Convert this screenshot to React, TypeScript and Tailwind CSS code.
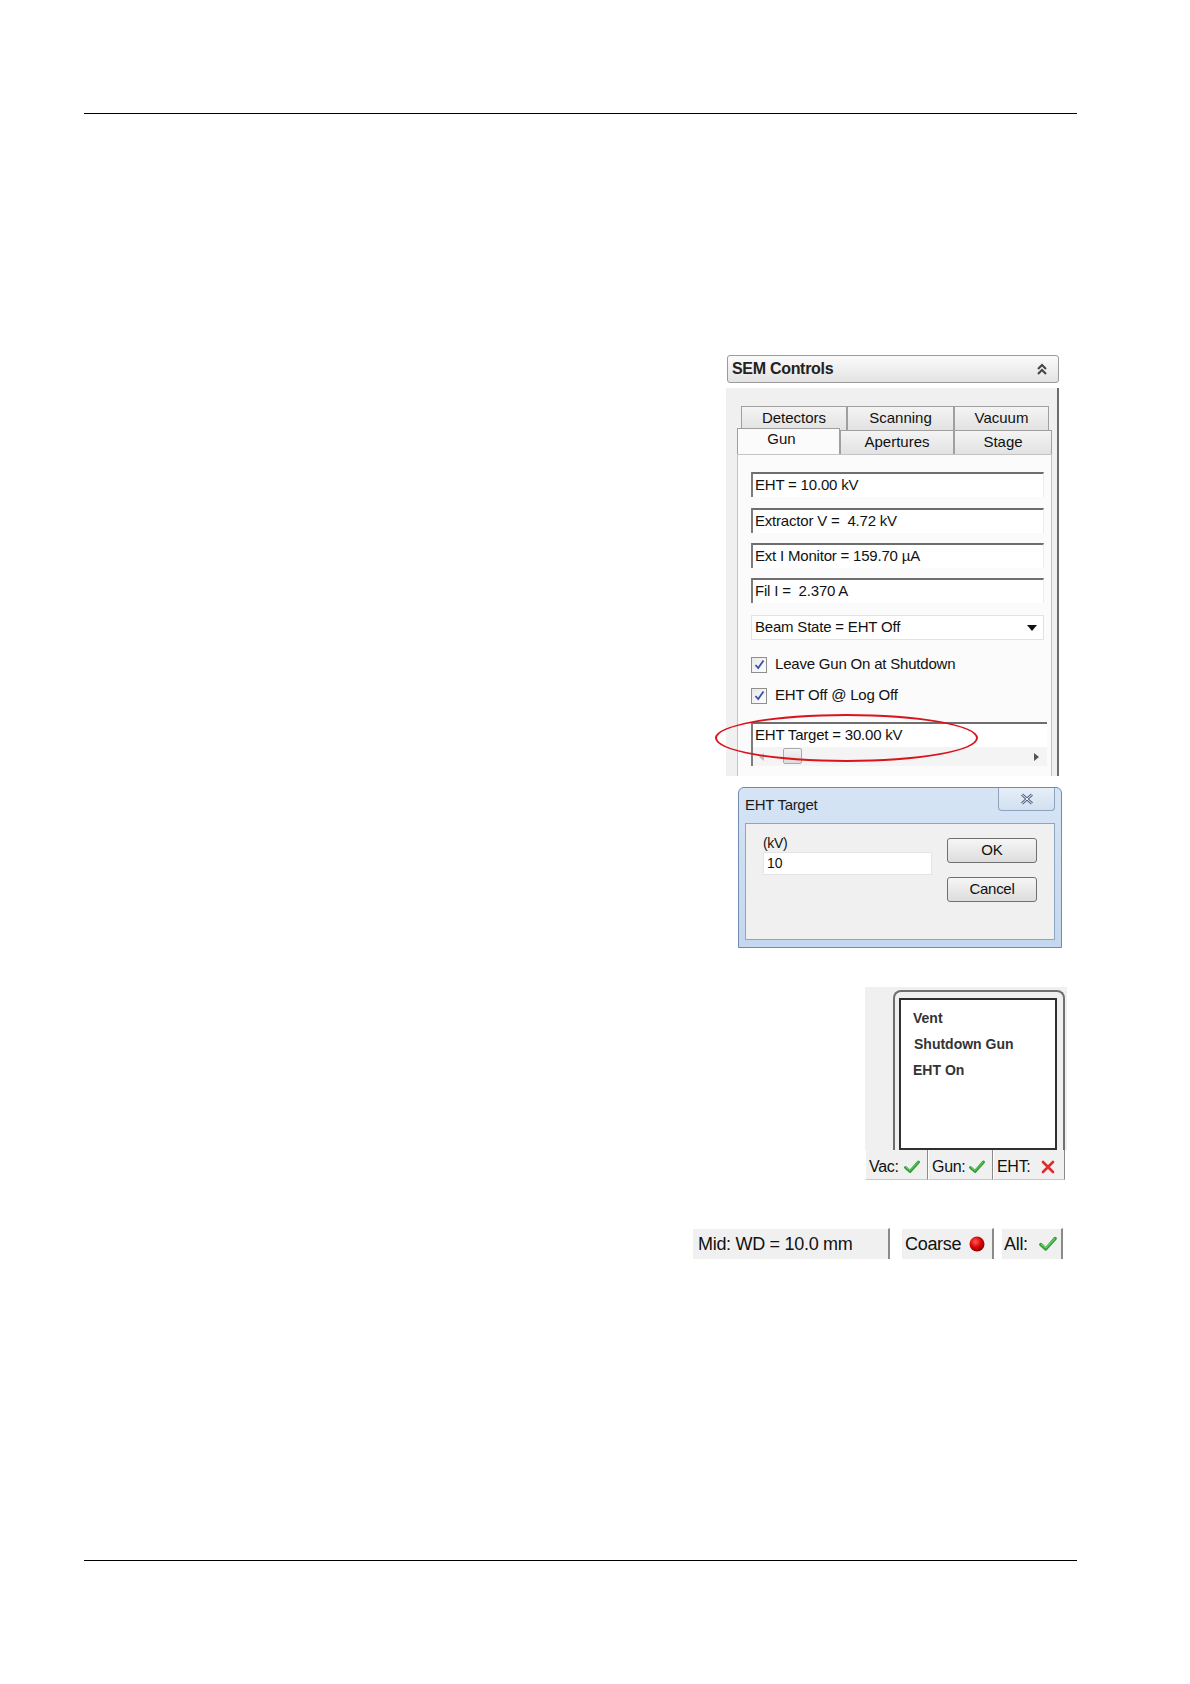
import React from 'react';

const font = { fontFamily: '"Liberation Sans", Arial, sans-serif' };

const Check = ({ size = 18 }: { size?: number }) => (
    <svg width={size} height={size} viewBox="0 0 18 18">
        <path d="M2.5 9.5 L7 13.5 L15.5 4" fill="none" stroke="#2f9e35" strokeWidth="3" strokeLinecap="round" strokeLinejoin="round" />
        <path d="M3 9.2 L7 12.6 L15 4.2" fill="none" stroke="#6fd36b" strokeWidth="1" strokeLinecap="round" strokeLinejoin="round" />
    </svg>
);

const Cross = () => (
    <svg width="16" height="16" viewBox="0 0 16 16">
        <path d="M3 3 L13 13 M13 3 L3 13" stroke="#e02b2b" strokeWidth="2.6" strokeLinecap="round" />
    </svg>
);

const Field = ({ children, className = '' }: { children: React.ReactNode; className?: string }) => (
    <div className={`h-[25px] w-[293px] bg-white border-t-2 border-l-2 border-t-[#6e6e6e] border-l-[#7c7c7c] border-r border-r-[#ececec] flex items-center pl-[2px] text-[15px] text-[#111] tracking-[-0.2px] ${className}`}>
        {children}
    </div>
);

const Tab = ({ label, w, active = false }: { label: string; w: string; active?: boolean }) => (
    <div
        className={`${w} flex items-center justify-center text-[15px] text-[#111] border border-b-0 border-[#9f9f9f] ${
            active ? 'h-[26px] -mt-[2px] bg-[#fbfbfb] relative z-10 -mb-px pb-[4px] pr-[14px]' : 'h-[24px] bg-gradient-to-b from-[#f4f4f4] to-[#e2e2e2]'
        }`}
    >
        {label}
    </div>
);

const CheckBox = ({ label }: { label: string }) => (
    <div className="flex items-center h-[17px]">
        <div className="w-[16px] h-[16px] border border-[#8e8f8f] bg-gradient-to-br from-[#e8e8e8] to-[#ffffff] flex items-center justify-center">
            <svg width="11" height="11" viewBox="0 0 11 11">
                <path d="M1.5 6 L4.2 9 L9.5 1.5" fill="none" stroke="#3553a0" strokeWidth="1.8" />
            </svg>
        </div>
        <span className="ml-[8px] text-[15px] text-[#111] tracking-[-0.2px]">{label}</span>
    </div>
);

const SemControls = () => (
    <div className="relative ml-[726px] mt-[241px] w-[334px]">
        {/* header */}
        <div className="ml-px w-[332px] h-[28px] rounded-[3px] border border-[#9a9a9a] bg-gradient-to-b from-[#fbfbfb] to-[#e3e3e3] flex items-center justify-between pl-[4px] pr-[9px]">
            <span className="text-[16px] font-bold text-[#222] tracking-[-0.3px]">SEM Controls</span>
            <svg width="14" height="14" viewBox="0 0 14 14">
                <path d="M3 7 L7 3 L11 7 M3 12 L7 8 L11 12" fill="none" stroke="#444" strokeWidth="2" />
            </svg>
        </div>

        {/* body */}
        <div className="mt-[5px] w-[333px] h-[388px] bg-[#f0f0f0] border-r-2 border-[#6c6c6c] pt-[18px] flex flex-col">
            <div className="ml-[15px] flex">
                <Tab label="Detectors" w="w-[106px]" />
                <Tab label="Scanning" w="w-[107px]" />
                <Tab label="Vacuum" w="w-[95px]" />
            </div>
            <div className="ml-[11px] flex items-start h-[24px]">
                <Tab label="Gun" w="w-[103px]" active />
                <Tab label="Apertures" w="w-[114px]" />
                <Tab label="Stage" w="w-[98px]" />
            </div>
            <div className="ml-[11px] w-[315px] flex-1 bg-[#fbfbfb] border border-b-0 border-[#c4c4c4] pt-[17px] pl-[13px] flex flex-col">
                <Field>EHT = 10.00 kV</Field>
                <Field className="mt-[11px]">Extractor V = &nbsp;4.72 kV</Field>
                <Field className="mt-[10px]">Ext I Monitor = 159.70 µA</Field>
                <Field className="mt-[10px]">Fil I = &nbsp;2.370 A</Field>
                <div className="mt-[12px] h-[25px] w-[293px] bg-white border border-[#e2e2e2] flex items-center justify-between pl-[3px] pr-[6px] text-[15px] text-[#111] tracking-[-0.2px]">
                    <span>Beam State = EHT Off</span>
                    <svg width="10" height="6" viewBox="0 0 10 6">
                        <path d="M0 0 H10 L5 6 Z" fill="#111" />
                    </svg>
                </div>
                <div className="mt-[16px]">
                    <CheckBox label="Leave Gun On at Shutdown" />
                </div>
                <div className="mt-[14px]">
                    <CheckBox label="EHT Off @ Log Off" />
                </div>
                <div className="mt-[18px] w-[296px] border-t-2 border-l-2 border-t-[#6e6e6e] border-l-[#7c7c7c] bg-white">
                    <div className="h-[23px] flex items-center pl-[2px] text-[15px] text-[#111] tracking-[-0.2px]">EHT Target = 30.00 kV</div>
                    <div className="h-[19px] bg-[#f4f4f4] flex items-center justify-between pl-[6px] pr-[8px] relative">
                        <svg width="5" height="8" viewBox="0 0 5 8">
                            <path d="M5 0 V8 L0 4 Z" fill="#bdbdbd" />
                        </svg>
                        <div className="absolute left-[30px] top-[1px] w-[19px] h-[16px] rounded-[2px] border border-[#aaaaaa] bg-gradient-to-b from-[#f4f4f4] to-[#dcdcdc]" />
                        <svg width="5" height="8" viewBox="0 0 5 8">
                            <path d="M0 0 V8 L5 4 Z" fill="#555" />
                        </svg>
                    </div>
                </div>
            </div>
        </div>

        {/* highlight */}
        <div className="absolute left-[-11px] top-[359px] w-[263px] h-[48px] rounded-[50%] border-[2.5px] border-[#d9141c]" />
    </div>
);

const EhtDialog = () => (
    <div className="ml-[738px] mt-[11px] w-[324px] h-[161px] rounded-t-[6px] border border-[#6f8cb0] bg-gradient-to-b from-[#d6e4f5] to-[#c4d7ee] flex flex-col">
        <div className="h-[35px] flex items-start justify-between">
            <span className="ml-[6px] mt-[6px] text-[15px] text-[#1b1b1b] tracking-[-0.3px]">EHT Target</span>
            <div className="mr-[6px] w-[57px] h-[23px] rounded-b-[4px] border border-t-0 border-[#8ea3bd] bg-gradient-to-b from-[#e6eef8] to-[#d3e0f0] flex items-center justify-center">
                <svg width="14" height="12" viewBox="0 0 14 12">
                    <path d="M2 1.5 L12 10.5 M12 1.5 L2 10.5" stroke="#4f6585" strokeWidth="3" />
                    <path d="M2 1.5 L12 10.5 M12 1.5 L2 10.5" stroke="#f4f7fb" strokeWidth="1" />
                </svg>
            </div>
        </div>
        <div className="ml-[6px] w-[310px] h-[117px] bg-[#f0f0f0] border border-[#8fa4bf] flex">
            <div className="pl-[17px] pt-[9px] w-[186px]">
                <div className="h-[18px] text-[14px] text-[#111] tracking-[-0.3px]">(kV)</div>
                <div className="mt-[1px] w-[169px] h-[23px] bg-white border border-[#e4e4e4] flex items-center pl-[3px] text-[14px] text-[#111]">10</div>
            </div>
            <div className="ml-[15px] pt-[14px] flex flex-col">
                <div className="w-[90px] h-[25px] rounded-[3px] border border-[#707070] bg-gradient-to-b from-[#f6f6f6] to-[#dddddd] flex items-center justify-center text-[15px] text-[#111]">OK</div>
                <div className="mt-[14px] w-[90px] h-[25px] rounded-[3px] border border-[#707070] bg-gradient-to-b from-[#f6f6f6] to-[#dddddd] flex items-center justify-center text-[15px] text-[#111] tracking-[-0.3px]">Cancel</div>
            </div>
        </div>
    </div>
);

const VentPanel = () => (
    <div className="ml-[865px] mt-[39px] w-[202px] flex flex-col">
        <div className="h-[163px] bg-[#f0f0f0] pt-[3px] pl-[28px]">
            <div className="w-[172px] h-[160px] rounded-t-[8px] border-2 border-b-0 border-[#6f6f6f] pt-[6px] pl-[4px]">
                <div className="w-[158px] h-[152px] bg-white border-2 border-[#303030] pl-[12px] pt-[5px] flex flex-col text-[14px] font-bold text-[#333]">
                    <div className="h-[26px] leading-[26px]">Vent</div>
                    <div className="h-[26px] leading-[26px] pl-px">Shutdown Gun</div>
                    <div className="h-[26px] leading-[26px]">EHT On</div>
                </div>
            </div>
        </div>
        <div className="h-[30px] flex text-[16px] text-[#111] tracking-[-0.3px]">
            <div className="w-[63px] bg-[#f0f0f0] border-l border-white border-r border-r-[#8a8a8a] border-b border-b-[#c8c8c8] flex items-center pt-[5px] pl-[3px] gap-[4px]">
                Vac: <Check />
            </div>
            <div className="w-[65px] bg-[#f0f0f0] border-l border-white border-r border-r-[#8a8a8a] border-b border-b-[#c8c8c8] flex items-center pt-[5px] pl-[3px] gap-[2px]">
                Gun: <Check />
            </div>
            <div className="w-[72px] bg-[#f0f0f0] border-l border-white border-r border-r-[#8a8a8a] border-b border-b-[#c8c8c8] flex items-center pt-[5px] pl-[3px] gap-[10px]">
                EHT: <Cross />
            </div>
        </div>
    </div>
);

const StatusBar = () => (
    <div className="ml-[693px] mt-[48px] h-[31px] flex text-[18px] text-[#111] tracking-[-0.3px]">
        <div className="w-[197px] bg-[#f0f0f0] border-t border-white border-r-2 border-r-[#8a8a8a] flex items-center pl-[5px]">Mid: WD = 10.0 mm</div>
        <div className="ml-[12px] w-[92px] bg-[#f0f0f0] border-t border-white border-r-2 border-r-[#8a8a8a] flex items-center pl-[3px] gap-[8px]">
            Coarse
            <svg width="16" height="16" viewBox="0 0 16 16">
                <defs>
                    <radialGradient id="dot" cx="40%" cy="35%" r="65%">
                        <stop offset="0%" stopColor="#ff5a5a" />
                        <stop offset="60%" stopColor="#d80000" />
                        <stop offset="100%" stopColor="#8a0000" />
                    </radialGradient>
                </defs>
                <circle cx="8" cy="8" r="7.5" fill="url(#dot)" />
            </svg>
        </div>
        <div className="ml-[8px] w-[61px] bg-[#f0f0f0] border-t border-white border-r-2 border-r-[#8a8a8a] flex items-center pl-[2px] gap-[10px]">
            All: <Check size={20} />
        </div>
    </div>
);

export default function App() {
    return (
        <div className="w-[1190px] h-[1684px] bg-white flex flex-col" style={font}>
            <div className="mt-[113px] ml-[84px] w-[993px] h-px bg-black" />
            <SemControls />
            <EhtDialog />
            <VentPanel />
            <StatusBar />
            <div className="mt-[301px] ml-[84px] w-[993px] h-px bg-black" />
        </div>
    );
}
